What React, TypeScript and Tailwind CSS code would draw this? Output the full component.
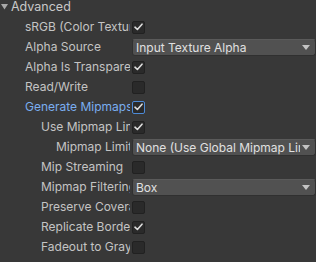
import React from "react";

const Check = () => (
  <svg width="9" height="8" viewBox="0 0 9 8" className="block">
    <path d="M1 4.2 L3.4 6.5 L8 1.2" fill="none" stroke="#dcdcdc" strokeWidth="1.6" strokeLinecap="round" strokeLinejoin="round" />
  </svg>
);

function Checkbox({ checked, focus }: { checked?: boolean; focus?: boolean }) {
  return (
    <div
      className={
        focus
          ? "w-[13px] h-[13px] rounded-[2px] bg-[#2a2a2a] border border-[#4d8ad6] flex items-center justify-center"
          : "w-[13px] h-[13px] rounded-[2px] bg-[#2a2a2a] border border-[#212121] flex items-center justify-center"
      }
    >
      {checked ? <Check /> : null}
    </div>
  );
}

function Dropdown({ text }: { text: string }) {
  return (
    <div className="flex-1 min-w-0 h-[17px] rounded-[3px] bg-[#515151] border border-[#303030] border-t-[#5a5a5a] flex items-center pl-[3px] pr-[5px] overflow-hidden">
      <span className="flex-1 min-w-0 whitespace-nowrap overflow-hidden text-[#e0e0e0] leading-[15px]">{text}</span>
      <svg width="8" height="5" viewBox="0 0 8 5" className="shrink-0 ml-[2px]">
        <path d="M0 0 H8 L4 5 Z" fill="#c4c4c4" />
      </svg>
    </div>
  );
}

type Row = {
  label: string;
  indent: number;
  kind: "check" | "drop";
  checked?: boolean;
  value?: string;
  blue?: boolean;
};

const rows: Row[] = [
  { label: "sRGB (Color Texture)", indent: 25, kind: "check", checked: true },
  { label: "Alpha Source", indent: 25, kind: "drop", value: "Input Texture Alpha" },
  { label: "Alpha Is Transparency", indent: 25, kind: "check", checked: true },
  { label: "Read/Write", indent: 25, kind: "check" },
  { label: "Generate Mipmaps", indent: 25, kind: "check", checked: true, blue: true },
  { label: "Use Mipmap Limits", indent: 41, kind: "check", checked: true },
  { label: "Mipmap Limit Group", indent: 56, kind: "drop", value: "None (Use Global Mipmap Limit)" },
  { label: "Mip Streaming", indent: 41, kind: "check" },
  { label: "Mipmap Filtering", indent: 41, kind: "drop", value: "Box" },
  { label: "Preserve Coverage", indent: 41, kind: "check" },
  { label: "Replicate Border", indent: 41, kind: "check", checked: true },
  { label: "Fadeout to Gray", indent: 41, kind: "check" },
];

export default function App() {
  return (
    <div
      className="w-[316px] h-[262px] bg-[#383838] text-[12px] text-[#c4c4c4] overflow-hidden"
      style={{ fontFamily: "Inter, 'Noto Sans', sans-serif" }}
    >
      <div className="h-[17px] flex items-start">
        <svg width="8" height="6" viewBox="0 0 8 6" className="ml-[1px] mt-[4px]">
          <path d="M0 0 H7 L3.5 5.5 Z" fill="#a8a8a8" />
        </svg>
        <span className="ml-[2px] leading-[14px] text-[#c8c8c8] text-[12.5px]">Advanced</span>
      </div>
      {rows.map((r) => (
        <div key={r.label} className="h-[20px] flex items-center">
          <div className="w-[130px] mr-[2px] shrink-0 overflow-hidden whitespace-nowrap flex">
            <span className={r.blue ? "text-[#7aaef0]" : ""} style={{ paddingLeft: r.indent }}>
              {r.label}
            </span>
          </div>
          {r.kind === "check" ? (
            <Checkbox checked={r.checked} focus={r.blue} />
          ) : (
            <div className="flex-1 min-w-0 flex">
              <Dropdown text={r.value || ""} />
            </div>
          )}
        </div>
      ))}
    </div>
  );
}
